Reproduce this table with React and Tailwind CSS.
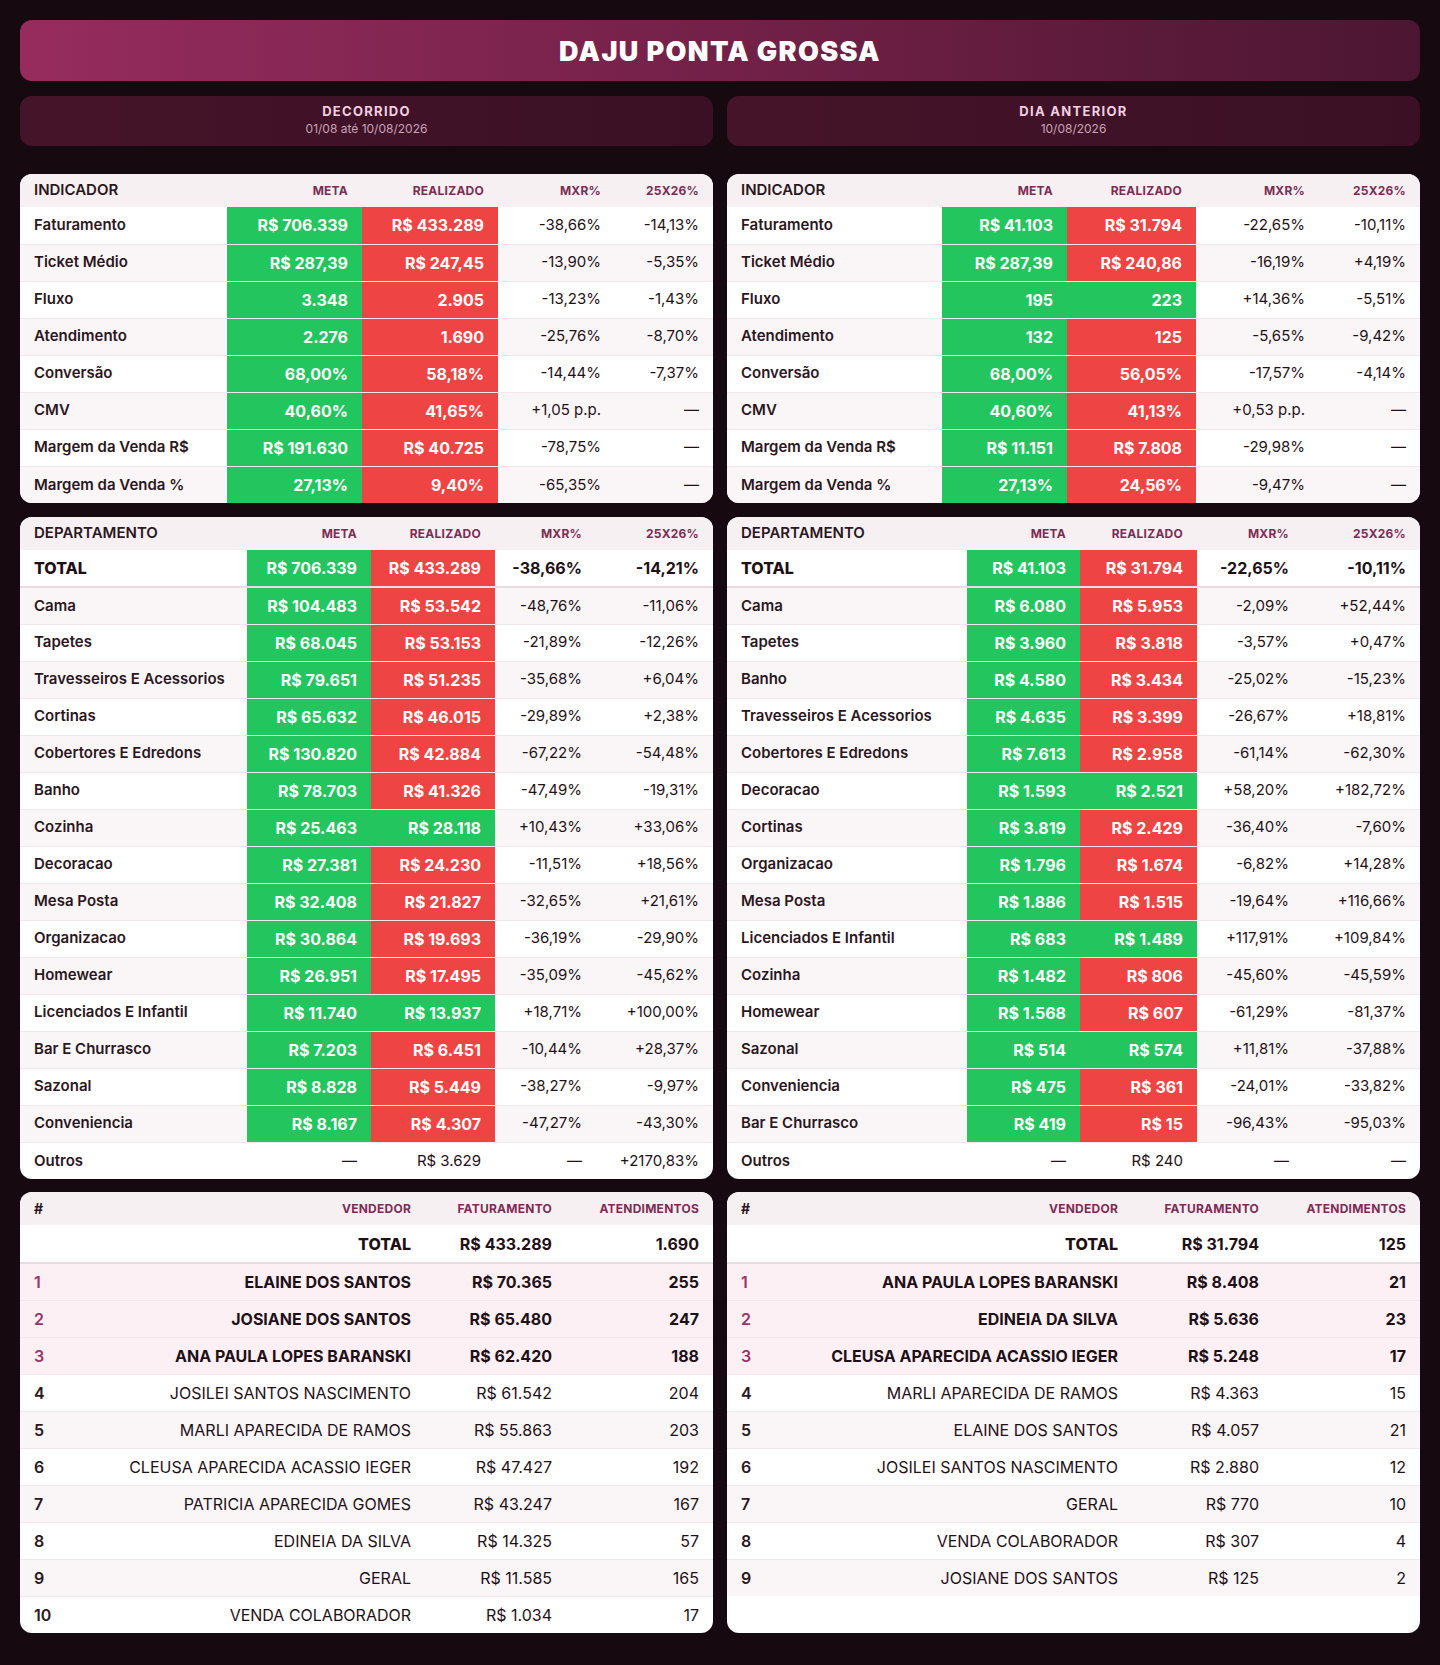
import React from "react";

const indicadores = {
  decorrido: [
    ["Faturamento", "R$ 706.339", "R$ 433.289", false, "-38,66%", "-14,13%"],
    ["Ticket Médio", "R$ 287,39", "R$ 247,45", false, "-13,90%", "-5,35%"],
    ["Fluxo", "3.348", "2.905", false, "-13,23%", "-1,43%"],
    ["Atendimento", "2.276", "1.690", false, "-25,76%", "-8,70%"],
    ["Conversão", "68,00%", "58,18%", false, "-14,44%", "-7,37%"],
    ["CMV", "40,60%", "41,65%", false, "+1,05 p.p.", "—"],
    ["Margem da Venda R$", "R$ 191.630", "R$ 40.725", false, "-78,75%", "—"],
    ["Margem da Venda %", "27,13%", "9,40%", false, "-65,35%", "—"],
  ],
  anterior: [
    ["Faturamento", "R$ 41.103", "R$ 31.794", false, "-22,65%", "-10,11%"],
    ["Ticket Médio", "R$ 287,39", "R$ 240,86", false, "-16,19%", "+4,19%"],
    ["Fluxo", "195", "223", true, "+14,36%", "-5,51%"],
    ["Atendimento", "132", "125", false, "-5,65%", "-9,42%"],
    ["Conversão", "68,00%", "56,05%", false, "-17,57%", "-4,14%"],
    ["CMV", "40,60%", "41,13%", false, "+0,53 p.p.", "—"],
    ["Margem da Venda R$", "R$ 11.151", "R$ 7.808", false, "-29,98%", "—"],
    ["Margem da Venda %", "27,13%", "24,56%", false, "-9,47%", "—"],
  ],
};

const departamentos = {
  decorrido: {
    total: ["R$ 706.339", "R$ 433.289", "-38,66%", "-14,21%"],
    rows: [
      ["Cama", "R$ 104.483", "R$ 53.542", false, "-48,76%", "-11,06%"],
      ["Tapetes", "R$ 68.045", "R$ 53.153", false, "-21,89%", "-12,26%"],
      ["Travesseiros E Acessorios", "R$ 79.651", "R$ 51.235", false, "-35,68%", "+6,04%"],
      ["Cortinas", "R$ 65.632", "R$ 46.015", false, "-29,89%", "+2,38%"],
      ["Cobertores E Edredons", "R$ 130.820", "R$ 42.884", false, "-67,22%", "-54,48%"],
      ["Banho", "R$ 78.703", "R$ 41.326", false, "-47,49%", "-19,31%"],
      ["Cozinha", "R$ 25.463", "R$ 28.118", true, "+10,43%", "+33,06%"],
      ["Decoracao", "R$ 27.381", "R$ 24.230", false, "-11,51%", "+18,56%"],
      ["Mesa Posta", "R$ 32.408", "R$ 21.827", false, "-32,65%", "+21,61%"],
      ["Organizacao", "R$ 30.864", "R$ 19.693", false, "-36,19%", "-29,90%"],
      ["Homewear", "R$ 26.951", "R$ 17.495", false, "-35,09%", "-45,62%"],
      ["Licenciados E Infantil", "R$ 11.740", "R$ 13.937", true, "+18,71%", "+100,00%"],
      ["Bar E Churrasco", "R$ 7.203", "R$ 6.451", false, "-10,44%", "+28,37%"],
      ["Sazonal", "R$ 8.828", "R$ 5.449", false, "-38,27%", "-9,97%"],
      ["Conveniencia", "R$ 8.167", "R$ 4.307", false, "-47,27%", "-43,30%"],
    ],
    outros: ["R$ 3.629", "+2170,83%"],
  },
  anterior: {
    total: ["R$ 41.103", "R$ 31.794", "-22,65%", "-10,11%"],
    rows: [
      ["Cama", "R$ 6.080", "R$ 5.953", false, "-2,09%", "+52,44%"],
      ["Tapetes", "R$ 3.960", "R$ 3.818", false, "-3,57%", "+0,47%"],
      ["Banho", "R$ 4.580", "R$ 3.434", false, "-25,02%", "-15,23%"],
      ["Travesseiros E Acessorios", "R$ 4.635", "R$ 3.399", false, "-26,67%", "+18,81%"],
      ["Cobertores E Edredons", "R$ 7.613", "R$ 2.958", false, "-61,14%", "-62,30%"],
      ["Decoracao", "R$ 1.593", "R$ 2.521", true, "+58,20%", "+182,72%"],
      ["Cortinas", "R$ 3.819", "R$ 2.429", false, "-36,40%", "-7,60%"],
      ["Organizacao", "R$ 1.796", "R$ 1.674", false, "-6,82%", "+14,28%"],
      ["Mesa Posta", "R$ 1.886", "R$ 1.515", false, "-19,64%", "+116,66%"],
      ["Licenciados E Infantil", "R$ 683", "R$ 1.489", true, "+117,91%", "+109,84%"],
      ["Cozinha", "R$ 1.482", "R$ 806", false, "-45,60%", "-45,59%"],
      ["Homewear", "R$ 1.568", "R$ 607", false, "-61,29%", "-81,37%"],
      ["Sazonal", "R$ 514", "R$ 574", true, "+11,81%", "-37,88%"],
      ["Conveniencia", "R$ 475", "R$ 361", false, "-24,01%", "-33,82%"],
      ["Bar E Churrasco", "R$ 419", "R$ 15", false, "-96,43%", "-95,03%"],
    ],
    outros: ["R$ 240", "—"],
  },
};

const vendedores = {
  decorrido: {
    total: ["R$ 433.289", "1.690"],
    rows: [
      ["ELAINE DOS SANTOS", "R$ 70.365", "255"],
      ["JOSIANE DOS SANTOS", "R$ 65.480", "247"],
      ["ANA PAULA LOPES BARANSKI", "R$ 62.420", "188"],
      ["JOSILEI SANTOS NASCIMENTO", "R$ 61.542", "204"],
      ["MARLI APARECIDA DE RAMOS", "R$ 55.863", "203"],
      ["CLEUSA APARECIDA ACASSIO IEGER", "R$ 47.427", "192"],
      ["PATRICIA APARECIDA GOMES", "R$ 43.247", "167"],
      ["EDINEIA DA SILVA", "R$ 14.325", "57"],
      ["GERAL", "R$ 11.585", "165"],
      ["VENDA COLABORADOR", "R$ 1.034", "17"],
    ],
  },
  anterior: {
    total: ["R$ 31.794", "125"],
    rows: [
      ["ANA PAULA LOPES BARANSKI", "R$ 8.408", "21"],
      ["EDINEIA DA SILVA", "R$ 5.636", "23"],
      ["CLEUSA APARECIDA ACASSIO IEGER", "R$ 5.248", "17"],
      ["MARLI APARECIDA DE RAMOS", "R$ 4.363", "15"],
      ["ELAINE DOS SANTOS", "R$ 4.057", "21"],
      ["JOSILEI SANTOS NASCIMENTO", "R$ 2.880", "12"],
      ["GERAL", "R$ 770", "10"],
      ["VENDA COLABORADOR", "R$ 307", "4"],
      ["JOSIANE DOS SANTOS", "R$ 125", "2"],
    ],
  },
};

const colWidths = {
  indDecorrido: [207, 135, 136, 117, 98],
  indAnterior: [215, 125, 129, 123, 101],
  depDecorrido: [227, 124, 124, 101, 117],
  depAnterior: [240, 113, 117, 106, 117],
  vend: [60, 345, 141, 147],
};

const Cols = ({ widths }) => (
  <colgroup>
    {widths.map((w, i) => (
      <col key={i} style={{ width: w }} />
    ))}
  </colgroup>
);

const th = "px-3.5 text-right text-[12px] font-bold tracking-[0.02em] text-[#7c2d55] uppercase";
const thFirst = "px-3.5 text-left text-[15px] font-semibold text-[#2b1621]";
const row = "h-[37px] border-b border-[#f1e7ec] last:border-b-0 even:bg-[#faf6f8]";
const green = "bg-[#22c55e] text-white font-bold text-[16px]";
const red = "bg-[#ef4444] text-white font-bold text-[16px]";

const Card = ({ children }) => (
  <div className="bg-white rounded-xl overflow-hidden">{children}</div>
);

const IndicadorTable = ({ data, widths }) => (
  <Card>
    <table className="w-full table-fixed border-collapse">
      <Cols widths={widths} />
      <thead>
        <tr className="h-[33px] bg-[#f6f0f3]">
          <th className={thFirst}>INDICADOR</th>
          <th className={th}>Meta</th>
          <th className={th}>Realizado</th>
          <th className={th}>MXR%</th>
          <th className={th}>25X26%</th>
        </tr>
      </thead>
      <tbody className="text-[15px] text-[#1f1017]">
        {data.map(([label, meta, real, ok, mxr, yoy]) => (
          <tr key={label} className={row}>
            <td className="px-3.5 font-semibold text-[#2b1621]">{label}</td>
            <td className={`px-3.5 text-right ${green}`}>{meta}</td>
            <td className={`px-3.5 text-right ${ok ? green : red}`}>{real}</td>
            <td className="px-3.5 text-right">{mxr}</td>
            <td className="px-3.5 text-right">{yoy}</td>
          </tr>
        ))}
      </tbody>
    </table>
  </Card>
);

const DepartamentoTable = ({ data, widths }) => (
  <Card>
    <table className="w-full table-fixed border-collapse">
      <Cols widths={widths} />
      <thead>
        <tr className="h-[33px] bg-[#f6f0f3]">
          <th className={thFirst}>DEPARTAMENTO</th>
          <th className={th}>Meta</th>
          <th className={th}>Realizado</th>
          <th className={th}>MXR%</th>
          <th className={th}>25X26%</th>
        </tr>
      </thead>
      <tbody className="text-[15px] text-[#1f1017]">
        <tr className="h-[37px] border-b-2 border-[#eadbe2] text-[16px] font-bold">
          <td className="px-3.5 font-extrabold">TOTAL</td>
          <td className={`px-3.5 text-right ${green}`}>{data.total[0]}</td>
          <td className={`px-3.5 text-right ${red}`}>{data.total[1]}</td>
          <td className="px-3.5 text-right">{data.total[2]}</td>
          <td className="px-3.5 text-right">{data.total[3]}</td>
        </tr>
        {data.rows.map(([label, meta, real, ok, mxr, yoy]) => (
          <tr key={label} className={row}>
            <td className="px-3.5 font-semibold text-[#2b1621]">{label}</td>
            <td className={`px-3.5 text-right ${green}`}>{meta}</td>
            <td className={`px-3.5 text-right ${ok ? green : red}`}>{real}</td>
            <td className="px-3.5 text-right">{mxr}</td>
            <td className="px-3.5 text-right">{yoy}</td>
          </tr>
        ))}
        <tr className={row}>
          <td className="px-3.5 font-semibold text-[#2b1621]">Outros</td>
          <td className="px-3.5 text-right">—</td>
          <td className="px-3.5 text-right">{data.outros[0]}</td>
          <td className="px-3.5 text-right">—</td>
          <td className="px-3.5 text-right">{data.outros[1]}</td>
        </tr>
      </tbody>
    </table>
  </Card>
);

const VendedorTable = ({ data }) => (
  <Card>
    <table className="w-full table-fixed border-collapse">
      <Cols widths={colWidths.vend} />
      <thead>
        <tr className="h-[33px] bg-[#f6f0f3]">
          <th className="px-3.5 text-left text-[14px] font-bold text-[#2b1621]">#</th>
          <th className={th}>Vendedor</th>
          <th className={th}>Faturamento</th>
          <th className={th}>Atendimentos</th>
        </tr>
      </thead>
      <tbody className="text-[16px] text-[#1f1017]">
        <tr className="h-[38px] border-b-2 border-[#eadbe2] font-bold">
          <td />
          <td className="px-3.5 text-right font-extrabold">TOTAL</td>
          <td className="px-3.5 text-right">{data.total[0]}</td>
          <td className="px-3.5 text-right">{data.total[1]}</td>
        </tr>
        {data.rows.map(([name, fat, atend], i) => {
          const top = i < 3;
          return (
            <tr
              key={name}
              className={`${row} ${top ? "!bg-[#fcf0f5] font-bold" : ""}`}
            >
              <td className={`px-3.5 font-semibold ${top ? "text-[#9a3468]" : "text-[#2b1621]"}`}>
                {i + 1}
              </td>
              <td className="px-3.5 text-right whitespace-nowrap">{name}</td>
              <td className="px-3.5 text-right">{fat}</td>
              <td className="px-3.5 text-right">{atend}</td>
            </tr>
          );
        })}
      </tbody>
    </table>
  </Card>
);

const Periodo = ({ title, sub }) => (
  <div className="h-[50px] pb-[3px] rounded-xl bg-gradient-to-r from-[#451429] to-[#3b1025] flex flex-col items-center justify-center gap-px">
    <p className="text-[13px] font-bold tracking-[0.1em] text-[#f2cfe0] leading-[18px]">{title}</p>
    <p className="text-[12px] text-[#c9a3b6] leading-4">{sub}</p>
  </div>
);

export default function App() {
  return (
    <div className="min-h-[1665px] bg-[#160a10] px-5 pt-5 pb-[33px] font-['Inter',sans-serif]">
      <div className="h-[61px] pt-[3px] rounded-xl bg-gradient-to-r from-[#962c5e] via-[#732148] to-[#4c1631] flex items-center justify-center">
        <h1 className="text-[27px] font-black tracking-[0.05em] text-white">DAJU PONTA GROSSA</h1>
      </div>

      <div className="mt-[15px] grid grid-cols-2 gap-3.5">
        <Periodo title="DECORRIDO" sub="01/08 até 10/08/2026" />
        <Periodo title="DIA ANTERIOR" sub="10/08/2026" />
      </div>

      <div className="mt-[28px] grid grid-cols-2 gap-3.5 items-stretch">
        <IndicadorTable data={indicadores.decorrido} widths={colWidths.indDecorrido} />
        <IndicadorTable data={indicadores.anterior} widths={colWidths.indAnterior} />
      </div>

      <div className="mt-[14px] grid grid-cols-2 gap-3.5 items-stretch">
        <DepartamentoTable data={departamentos.decorrido} widths={colWidths.depDecorrido} />
        <DepartamentoTable data={departamentos.anterior} widths={colWidths.depAnterior} />
      </div>

      <div className="mt-[13px] grid grid-cols-2 gap-3.5 items-stretch">
        <VendedorTable data={vendedores.decorrido} />
        <VendedorTable data={vendedores.anterior} />
      </div>
    </div>
  );
}
